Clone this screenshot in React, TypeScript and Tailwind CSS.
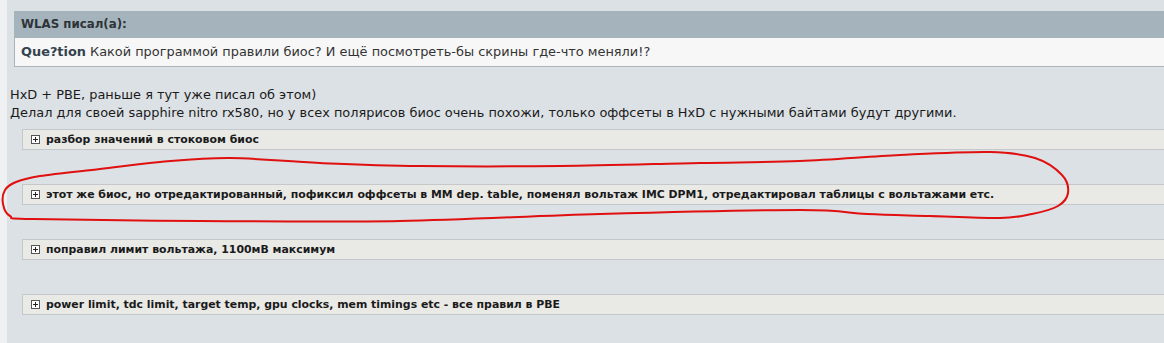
import React from "react";

const spoilers = [
  "разбор значений в стоковом биос",
  "этот же биос, но отредактированный, пофиксил оффсеты в MM dep. table, поменял вольтаж IMC DPM1, отредактировал таблицы с вольтажами етс.",
  "поправил лимит вольтажа, 1100мВ максимум",
  "power limit, tdc limit, target temp, gpu clocks, mem timings etc - все правил в PBE",
];

// hand drawn loop around the second spoiler
const loop: [number, number][] = [
  [40, 176], [100, 169], [160, 162], [230, 158], [320, 163], [420, 166],
  [560, 166], [700, 163], [800, 161], [900, 155], [990, 152], [1035, 158],
  [1062, 175], [1068, 193], [1058, 206], [1032, 214], [1000, 218], [930, 216],
  [867, 214], [800, 210], [600, 214], [400, 221], [200, 221], [33, 219],
  [10, 216], [3, 204], [5, 190], [16, 182],
];

function smoothPath(pts: [number, number][]) {
  const n = pts.length;
  let d = `M ${pts[0][0]} ${pts[0][1]}`;
  for (let i = 0; i < n; i++) {
    const p0 = pts[(i - 1 + n) % n];
    const p1 = pts[i];
    const p2 = pts[(i + 1) % n];
    const p3 = pts[(i + 2) % n];
    const c1x = p1[0] + (p2[0] - p0[0]) / 6;
    const c1y = p1[1] + (p2[1] - p0[1]) / 6;
    const c2x = p2[0] - (p3[0] - p1[0]) / 6;
    const c2y = p2[1] - (p3[1] - p1[1]) / 6;
    d += ` C ${c1x.toFixed(1)} ${c1y.toFixed(1)} ${c2x.toFixed(1)} ${c2y.toFixed(1)} ${p2[0]} ${p2[1]}`;
  }
  return d;
}

const PlusBox = () => (
  <svg width="9" height="9" viewBox="0 0 9 9" className="shrink-0">
    <rect x="0.5" y="0.5" width="8" height="8" fill="#fff" stroke="#555" />
    <path d="M2 4.5h5M4.5 2v5" stroke="#222" strokeWidth="1" />
  </svg>
);

function Spoiler({text}: {text: string}) {
  return (
    <div className="ml-[15px] h-[21px] flex items-center gap-[6px] pl-[8px] bg-[#e9e9e6] border-y border-l border-[#c5c8cb] text-[10.9px] font-bold text-[#1a1a1a] whitespace-nowrap">
      <PlusBox />
      <span className="pt-[1px]">{text}</span>
    </div>
  );
}

export default function App() {
  return (
    <div
      className="relative w-[1164px] h-[343px] flex overflow-hidden bg-[#eef0f2]"
      style={{fontFamily: '"DejaVu Sans", Verdana, sans-serif'}}
    >
      <div className="ml-[7px] flex-1 bg-[#dce1e5] pt-[11px]">
        {/* quote */}
        <div className="ml-[7px]">
          <div className="h-[27px] bg-[#a5b4bc] flex items-center pl-[7px] text-[11.8px] font-bold text-[#2e3338]">
            WLAS писал(а):
          </div>
          <div className="h-[29px] bg-[#f7f7f7] border-l border-b border-[#aeb3b6] flex items-center pl-[6px] text-[12.9px] text-[#333]">
            <b className="text-[#35424e] mr-[4px]">Que?tion</b>
            Какой программой правили биос? И ещё посмотреть-бы скрины где-что меняли!?
          </div>
        </div>

        <div className="mt-[19px] pl-[3px] text-[12.9px] leading-[18px] text-[#1a1a1a]">
          <div>HxD + PBE, раньше я тут уже писал об этом)</div>
          <div>
            Делал для своей sapphire nitro rx580, но у всех полярисов биос очень похожи, только оффсеты в HxD с нужными байтами будут другими.
          </div>
        </div>

        <div className="mt-[7px] flex flex-col gap-[34px]">
          {spoilers.map((s) => (
            <Spoiler key={s} text={s} />
          ))}
        </div>
      </div>

      <svg
        className="absolute left-0 top-0 pointer-events-none"
        width="1164"
        height="343"
      >
        <path d={smoothPath(loop)} fill="none" stroke="#e01010" strokeWidth="2" />
      </svg>
    </div>
  );
}
